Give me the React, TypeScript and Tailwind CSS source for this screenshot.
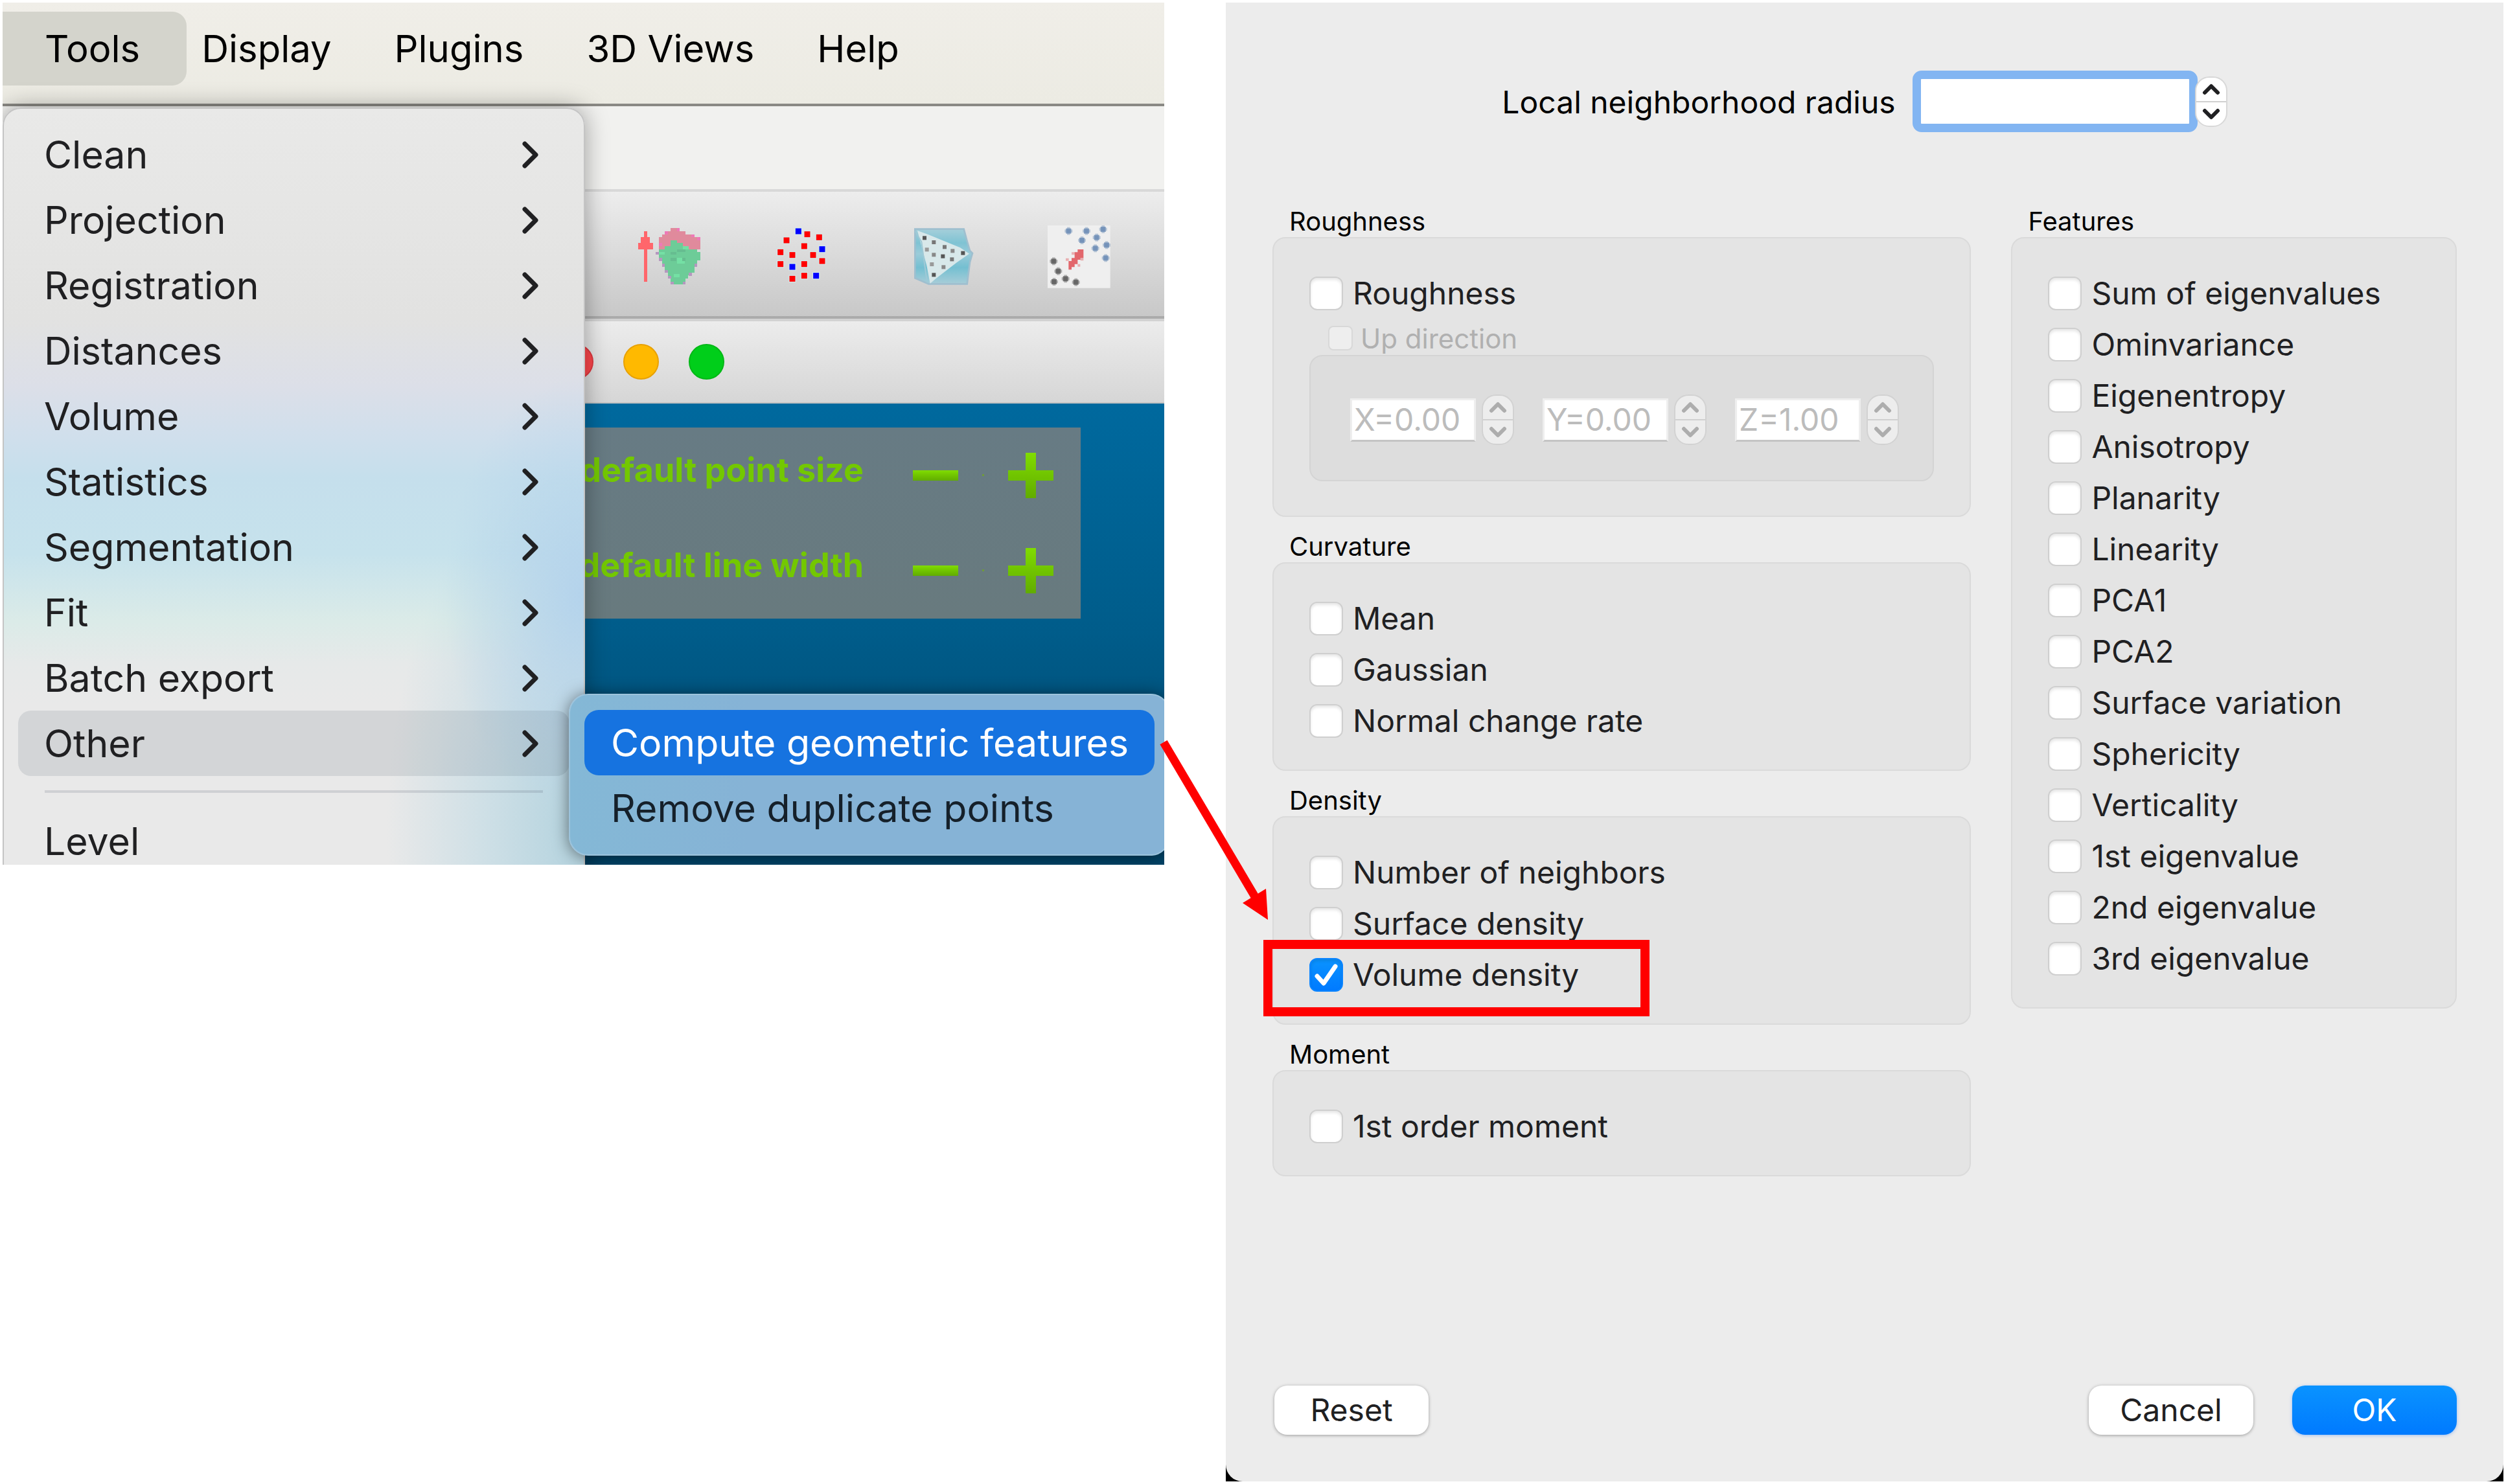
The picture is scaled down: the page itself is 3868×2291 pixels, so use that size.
import React, { useState } from "react";

const MENU_BAR = ["Display", "Plugins", "3D Views", "Help"];

const TOOL_ITEMS = [
  "Clean",
  "Projection",
  "Registration",
  "Distances",
  "Volume",
  "Statistics",
  "Segmentation",
  "Fit",
  "Batch export",
  "Other",
];

const FEATURES = [
  "Sum of eigenvalues",
  "Ominvariance",
  "Eigenentropy",
  "Anisotropy",
  "Planarity",
  "Linearity",
  "PCA1",
  "PCA2",
  "Surface variation",
  "Sphericity",
  "Verticality",
  "1st eigenvalue",
  "2nd eigenvalue",
  "3rd eigenvalue",
];

type Square = [number, number, string];

function Squares({ items, size }: { items: Square[]; size: number }) {
  return (
    <>
      {items.map(([x, y, fill], i) => (
        <rect key={i} x={x - size / 2} y={y - size / 2} width={size} height={size} fill={fill} />
      ))}
    </>
  );
}

function NormalsIcon() {
  return (
    <svg viewBox="69 54 300 294" className="h-[98px] w-[100px]" shapeRendering="crispEdges" aria-hidden="true">
      <path d="M102 81h14v27h14v28h14v28h-28v151h-14V164H74v-28h14v-28h14z" fill="#ff666b" />
      <path d="M226 67h42v14h26v14h42v14h27v55H171v-55h14V95h14V81h27z" fill="#e08a9c" />
      <path d="M254 67h14v14h-14zM199 81h14v14h-14zM322 95h14v14h-14zM349 109h14v14h-14zM171 136h14v14h-14z" fill="#ee79b8" />
      <path d="M226 122h28v14h28v14h28v14h39v14h14v38h-14v28h-14v28h-14v14h-14v14h-13v28h-68v-28h-14v-28h-13v-28h-14v-28h-14v-52h28v-14h27z" fill="#6dcc98" />
      <path d="M171 178h28v12h-28zM282 150h28v14h-28zM254 205h38v26h-38zM240 280h26v14h-26z" fill="#74e0a4" />
      <path d="M226 178h26v12h-26zM226 205h26v14h-26zM278 205h16v14h-16zM254 164h40v12h-40z" fill="#66bd90" />
      <path d="M157 178h14v12h-14zM171 205h14v14h-14zM185 232h14v14h-14zM199 260h14v14h-14zM213 287h14v14h-14zM226 315h14v13h-14zM281 315h14v13h-14zM309 274h14v14h-14zM336 232h13v14h-13z" fill="#b597bf" />
    </svg>
  );
}

const R = "#ff0000";
const B = "#0000ff";
const SAMPLE: Square[] = [
  [817, 81, B], [858, 95, R], [913, 109, R], [762, 123, R], [844, 150, R], [927, 164, B],
  [734, 178, R], [789, 191, R], [885, 191, R], [927, 219, R], [734, 233, R], [844, 233, R],
  [789, 246, B], [844, 287, R], [899, 287, B], [789, 301, R],
];

function SampleIcon() {
  return (
    <svg viewBox="702 54 300 294" className="h-[98px] w-[100px]" aria-hidden="true">
      <Squares items={SAMPLE.map(([x, y]) => [x, y, "#d3ecec"] as Square)} size={34} />
      <Squares items={SAMPLE} size={27} />
    </svg>
  );
}

const HULL: Square[] = [
  [141, 112, "#555"], [184, 132, "#777"], [234, 154, "#777"], [152, 166, "#999"], [271, 172, "#888"],
  [319, 182, "#555"], [184, 190, "#888"], [226, 197, "#555"], [268, 211, "#777"], [175, 234, "#999"],
  [229, 247, "#888"], [184, 283, "#555"],
];

function HullIcon() {
  return (
    <svg viewBox="75 54 300 294" className="h-[98px] w-[100px]" aria-hidden="true">
      <defs>
        <linearGradient id="hull" x1="0" y1="0" x2="0" y2="1">
          <stop offset="0" stopColor="#a5cfda" />
          <stop offset="0.25" stopColor="#7fc3d3" />
          <stop offset="0.45" stopColor="#9bcbd9" />
          <stop offset="0.7" stopColor="#74bfd1" />
          <stop offset="1" stopColor="#a7cdd8" />
        </linearGradient>
      </defs>
      <path d="M97 71h226l14 52 14 48 12 12-12 42-13 100H160l-63-27z" fill="url(#hull)" stroke="#9fbfcf" strokeWidth="8" />
      <path d="M108 78l48 17 150 62 42 28-60 42-95 74-26 22-16-84-18-66z" fill="#d8e8ea" />
      <path d="M97 80l30 50 26 190" fill="none" stroke="#9fc9d6" strokeWidth="6" />
      <Squares items={HULL} size={18} />
    </svg>
  );
}

const BL = "#6a8bb5";
const DK = "#5a5a5a";
const RD = "#df4f55";
const REG: Square[] = [
  [808, 80, BL], [891, 80, BL], [968, 72, BL], [870, 123, BL], [938, 110, BL], [932, 160, BL],
  [984, 145, BL], [980, 205, BL], [739, 220, DK], [760, 266, DK], [741, 315, DK], [794, 301, DK], [842, 317, DK],
];

function RegisterIcon() {
  return (
    <svg viewBox="708 54 300 294" className="h-[98px] w-[100px]" aria-hidden="true">
      <rect x="711" y="54" width="290" height="290" fill="#efefef" />
      {REG.map(([x, y, c], i) => (
        <g key={i} fill={c}>
          <rect x={x - 18} y={y - 7} width="36" height="14" opacity="0.4" />
          <rect x={x - 7} y={y - 18} width="14" height="36" opacity="0.4" />
          <rect x={x - 12} y={y - 12} width="24" height="24" opacity="0.8" />
        </g>
      ))}
      <path d="M836 178h14v-13h27v40h-14v8h-13v20h-14v14h-14v12h-14v-40h14v-14h14v-14z" fill={RD} opacity="0.85" />
      <path d="M822 178h14v12h-14zM863 205h14v12h-14zM795 206h14v12h-14zM850 233h12v12h-12z" fill={RD} opacity="0.4" />
    </svg>
  );
}

function MenuChevron() {
  return (
    <svg viewBox="0 0 26 44" className="h-[44px] w-[26px]" fill="none" stroke="#202022" strokeWidth="7" strokeLinecap="round" strokeLinejoin="round" aria-hidden="true">
      <path d="M4 5l17 17L4 39" />
    </svg>
  );
}

function Glyph({ plus }: { plus?: boolean }) {
  return (
    <svg viewBox="0 0 70 70" className="h-[70px] w-[70px]" aria-hidden="true">
      <defs>
        <linearGradient id={plus ? "gp" : "gm"} gradientUnits="userSpaceOnUse" x1="0" y1={plus ? 0 : 27} x2="0" y2={plus ? 70 : 43}>
          <stop offset="0" stopColor="#80dc00" />
          <stop offset="1" stopColor="#61ac00" />
        </linearGradient>
      </defs>
      <path d={plus ? "M27 0h16v27h27v16H43v27H27V43H0V27h27z" : "M0 27h70v16H0z"} fill={plus ? "url(#gp)" : "url(#gm)"} />
    </svg>
  );
}

function ViewSetting({ name }: { name: string }) {
  return (
    <div className="flex h-[147px] items-center">
      <span className="mr-[76px] pb-[16px] text-[52px] font-bold whitespace-nowrap text-[#73c800]">{name}</span>
      <button type="button" aria-label={`Decrease ${name}`}>
        <Glyph />
      </button>
      <span className="mx-[37px] h-[3px] w-[3px] bg-[#6f9a3c]" />
      <button type="button" aria-label={`Increase ${name}`}>
        <Glyph plus />
      </button>
    </div>
  );
}

function ToolsMenu() {
  return (
    <div
      role="menu"
      aria-label="Tools"
      className="absolute top-[162px] left-0 h-[1300px] w-[899px] rounded-[28px] border-2 border-[#c4c4c4] bg-[radial-gradient(ellipse_24%_26%_at_100%_58%,#b4d3ec,#b4d3ec77_50%,transparent),radial-gradient(ellipse_34%_44%_at_100%_86%,#b2d2de,#bcd9e499_50%,transparent),linear-gradient(180deg,#e9e9e8_0%,#e2e2e1_25%,#dcdfe8_33%,#d0dfec_39%,#c5dfec_44%,#c6e2ec_53%,#dbebe8_61%,#e6e9e9_66%,#e9e9e9_71%)] pt-[20px] text-[59px] leading-[60px] text-[#202022] shadow-[0_0_36px_rgba(0,0,0,0.35)]"
    >
      {TOOL_ITEMS.map((item) => (
        <div key={item} className="px-[22px]">
          <button
            type="button"
            role="menuitem"
            className={
              item === "Other"
                ? "flex h-[101px] w-full items-center justify-between rounded-[20px] bg-[#3c465a]/12 pr-[47px] pl-[40px]"
                : "flex h-[101px] w-full items-center justify-between pr-[47px] pl-[40px]"
            }
          >
            <span>{item}</span>
            <MenuChevron />
          </button>
        </div>
      ))}
      <hr className="mx-[63px] mt-[22px] mb-[24px] border-0 border-t-4 border-[#3c465a]/15" />
      <button type="button" role="menuitem" className="flex h-[101px] w-full items-center pl-[62px]">
        Level
      </button>
    </div>
  );
}

function SubMenu() {
  return (
    <div
      role="menu"
      aria-label="Other"
      className="absolute top-[1067px] left-[874px] w-[928px] rounded-[30px] border-2 border-[#9cc3dc] bg-[linear-gradient(90deg,#84b8d6,#86b3d6_30%)] px-[22px] pt-[23px] pb-[21px] text-[59px] leading-[60px] text-[#15202a] shadow-[0_2px_24px_rgba(0,0,0,0.5)]"
    >
      <button type="button" role="menuitem" className="flex h-[101px] w-[880px] items-center rounded-[22px] bg-[#1673e0] pl-[41px] whitespace-nowrap text-white">
        Compute geometric features
      </button>
      <button type="button" role="menuitem" className="flex h-[101px] w-full items-center pl-[41px] whitespace-nowrap">
        Remove duplicate points
      </button>
    </div>
  );
}

function MainWindow() {
  return (
    <div className="relative overflow-hidden">
      <nav className="flex h-[160px] items-start border-b-4 border-[#8a8984] bg-[linear-gradient(180deg,#f0eee8,#ecebe3)] pt-[14px] text-[58px] text-black">
        <button type="button" className="h-[114px] rounded-r-[22px] bg-[#d4d4cc] pr-[72px] pl-[65px]">
          Tools
        </button>
        <div className="flex gap-[97px] pl-[23px]">
          {MENU_BAR.map((item) => (
            <button key={item} type="button" className="h-[114px] whitespace-nowrap">
              {item}
            </button>
          ))}
        </div>
      </nav>
      <div className="h-[128px] bg-[#f1f1ef]" />
      <div className="flex h-[200px] items-start gap-[111px] border-t-4 border-b-4 border-t-[#d8d8d8] border-b-[#ababab] bg-[linear-gradient(180deg,#ededed,#c8c8c8)] pt-[52px] pl-[979px]">
        <button type="button" aria-label="Compute normals"><NormalsIcon /></button>
        <button type="button" aria-label="Subsample"><SampleIcon /></button>
        <button type="button" aria-label="Build hull"><HullIcon /></button>
        <button type="button" aria-label="Register clouds"><RegisterIcon /></button>
      </div>
      <div className="flex h-[131px] items-center gap-[46px] border-t-4 border-b-2 border-t-[#d2d2d2] border-b-[#c2c2c2] bg-[linear-gradient(180deg,#ececec,#d6d6d6)] pl-[857px]">
        <button type="button" aria-label="Close" className="size-[55px] rounded-full border-2 border-[#e0383f] bg-[#fc464b]" />
        <button type="button" aria-label="Minimize" className="size-[55px] rounded-full border-2 border-[#e8a100] bg-[#ffb900]" />
        <button type="button" aria-label="Zoom" className="size-[55px] rounded-full border-2 border-[#00b816] bg-[#00ce1a]" />
      </div>
      <div className="h-[712px] bg-[linear-gradient(180deg,#00699e,#005c8a_50%,#004468)] pt-[37px]">
        <div className="mr-[129px] flex h-[295px] flex-col items-end bg-[linear-gradient(180deg,#677b84,#687a7e)] pr-[42px]">
          <ViewSetting name="default point size" />
          <ViewSetting name="default line width" />
        </div>
      </div>
      <ToolsMenu />
      <SubMenu />
    </div>
  );
}

function Arrow() {
  return (
    <svg viewBox="1785 1135 180 290" className="absolute top-[1131px] left-[1781px] z-10 h-[290px] w-[180px]" aria-hidden="true">
      <path d="M1796 1146L1938 1386" stroke="#ff0000" strokeWidth="13" />
      <path d="M1957 1420L1954 1372L1918 1394z" fill="#ff0000" />
    </svg>
  );
}

function Check({ label, initial = false, marked = false }: { label: string; initial?: boolean; marked?: boolean }) {
  const [on, setOn] = useState(initial);
  return (
    <div className="relative flex h-[79px] items-center">
      <label className="flex items-center gap-[15px] text-[48px] leading-[56px] whitespace-nowrap text-[#202022]">
        <span className="relative size-[52px]">
          <input
            type="checkbox"
            checked={on}
            onChange={(e) => setOn(e.target.checked)}
            className="block size-[52px] appearance-none rounded-[12px] border-2 border-[#cfcfcf] bg-white shadow-[inset_0_3px_4px_rgba(0,0,0,0.1)] checked:border-[#0a84ff] checked:bg-[linear-gradient(180deg,#0a93ff,#007aff)]"
          />
          {on && (
            <svg viewBox="0 0 52 52" className="pointer-events-none absolute inset-0 size-[52px]" fill="none" stroke="white" strokeWidth="7" strokeLinecap="round" strokeLinejoin="round" aria-hidden="true">
              <path d="M12 28l10 11L40 13" />
            </svg>
          )}
        </span>
        {label}
      </label>
      {marked && <div className="pointer-events-none absolute top-[-14px] left-[-71px] h-[118px] w-[596px] border-[14px] border-[#ff0000]" />}
    </div>
  );
}

function Group({ title, children }: { title: string; children: React.ReactNode }) {
  return (
    <section aria-label={title}>
      <h2 className="h-[50px] pl-[26px] text-[40px] leading-[52px] text-black">{title}</h2>
      <div className="rounded-[20px] border-2 border-[#dadada] bg-[#e4e4e4] px-[55px] pt-[45px] pb-[36px]">{children}</div>
    </section>
  );
}

function Stepper({ name, disabled = false }: { name: string; disabled?: boolean }) {
  const part = "flex flex-1 items-center justify-center";
  return (
    <div
      className={
        disabled
          ? "flex h-[78px] w-[50px] flex-col overflow-hidden rounded-[22px] border-2 border-[#d2d2d2] bg-[#ededed] text-[#adadad]"
          : "flex h-[78px] w-[50px] flex-col overflow-hidden rounded-[22px] border-2 border-[#d8d8d8] bg-white text-[#202022]"
      }
    >
      <button type="button" disabled={disabled} aria-label={`Increase ${name}`} className={part}>
        <svg viewBox="0 0 28 18" className="h-[18px] w-[28px]" fill="none" stroke="currentColor" strokeWidth="6" strokeLinecap="round" strokeLinejoin="round" aria-hidden="true">
          <path d="M4 14L14 4l10 10" />
        </svg>
      </button>
      <div className="h-[2px] bg-[#d0d0d0]" />
      <button type="button" disabled={disabled} aria-label={`Decrease ${name}`} className={part}>
        <svg viewBox="0 0 28 18" className="h-[18px] w-[28px]" fill="none" stroke="currentColor" strokeWidth="6" strokeLinecap="round" strokeLinejoin="round" aria-hidden="true">
          <path d="M4 4l10 10L24 4" />
        </svg>
      </button>
    </div>
  );
}

function Axis({ value, name }: { value: string; name: string }) {
  return (
    <div className="flex items-center gap-[9px]">
      <input
        type="text"
        disabled
        defaultValue={value}
        aria-label={name}
        className="h-[67px] w-[194px] border-3 border-[#eeeeee] border-b-[#c4c4c4] bg-white pl-[3px] text-[48px] text-[#bcbcbc]"
      />
      <Stepper name={name} disabled />
    </div>
  );
}

function FeaturesDialog() {
  return (
    <div className="flex h-full flex-col rounded-b-[26px] bg-[#ececec]">
      <div className="flex items-center justify-center pt-[105px]">
        <label htmlFor="radius" className="mr-[26px] pt-[3px] text-[48px] text-black">
          Local neighborhood radius
        </label>
        <input id="radius" type="text" className="h-[95px] w-[440px] rounded-[14px] border-[13px] border-[#82b5f2] bg-white px-2 text-[48px] outline-none" />
        <div className="-ml-1">
          <Stepper name="radius" />
        </div>
      </div>
      <div className="mt-[112px] grid grid-cols-[1079fr_688fr] items-start gap-[62px] px-[72px]">
        <div className="flex flex-col gap-[20px]">
          <Group title="Roughness">
            <Check label="Roughness" />
            <label className="flex h-[56px] items-center gap-[12px] pt-1 pl-[29px] text-[42px] text-[#b0b0b0]">
              <input type="checkbox" disabled className="size-[38px] appearance-none rounded-[8px] border-2 border-[#d8d8d8] bg-[#eeeeee]" />
              Up direction
            </label>
            <div className="mb-[17px] flex items-center gap-[44px] rounded-[20px] border-2 border-[#d4d4d4] bg-[#dddddd] pt-[59px] pb-[54px] pl-[61px]">
              <Axis name="X" value="X=0.00" />
              <Axis name="Y" value="Y=0.00" />
              <Axis name="Z" value="Z=1.00" />
            </div>
          </Group>
          <Group title="Curvature">
            <Check label="Mean" />
            <Check label="Gaussian" />
            <Check label="Normal change rate" />
          </Group>
          <Group title="Density">
            <Check label="Number of neighbors" />
            <Check label="Surface density" />
            <Check label="Volume density" initial marked />
          </Group>
          <Group title="Moment">
            <Check label="1st order moment" />
          </Group>
        </div>
        <Group title="Features">
          {FEATURES.map((f) => (
            <Check key={f} label={f} />
          ))}
        </Group>
      </div>
      <div className="mt-auto flex items-center pr-[72px] pb-[72px] pl-[75px] text-[48px] text-[#202022]">
        <button type="button" className="mr-auto h-[76px] w-[238px] rounded-[20px] bg-white shadow-[0_1px_5px_rgba(0,0,0,0.35)]">
          Reset
        </button>
        <button type="button" className="mr-[60px] h-[76px] w-[254px] rounded-[20px] bg-white shadow-[0_1px_5px_rgba(0,0,0,0.35)]">
          Cancel
        </button>
        <button type="button" className="h-[76px] w-[254px] rounded-[20px] bg-[linear-gradient(180deg,#0a93ff,#007aff)] text-white shadow-[0_1px_5px_rgba(0,100,255,0.35)]">
          OK
        </button>
      </div>
    </div>
  );
}

export default function App() {
  return (
    <main className="flex min-h-screen items-start gap-[95px] bg-white p-1 font-['Inter','Liberation_Sans',sans-serif]">
      <div className="relative min-w-0 flex-[1793]">
        <MainWindow />
        <Arrow />
      </div>
      <div className="min-w-0 flex-[1972] self-stretch bg-black [&>div]:min-h-full">
        <FeaturesDialog />
      </div>
    </main>
  );
}
